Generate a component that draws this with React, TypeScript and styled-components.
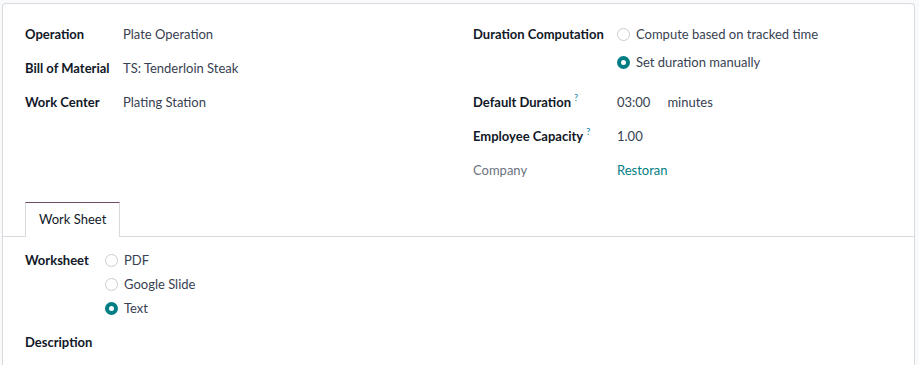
import styled, { createGlobalStyle } from "styled-components";

const GlobalStyle = createGlobalStyle`
  html, body {
    margin: 0;
    padding: 0;
    background: #f9fafb;
    font-family: Lato, "Noto Sans", sans-serif;
    font-size: 13px;
    color: #374151;
  }
`;

const Sheet = styled.div`
  margin: 3px 4px 0 2px;
  min-height: 370px;
  background: #fff;
  border: 1px solid #d8dadd;
  border-bottom: none;
  border-radius: 4px 4px 0 0;
  padding-top: 19px;
`;

const Groups = styled.div`
  display: grid;
  grid-template-columns: 448px 1fr;
  padding: 0 22px;
`;

const Group = styled.div`
  display: flex;
  flex-direction: column;
`;

const Row = styled.div<{ $labelWidth: number; $gap?: number }>`
  display: grid;
  grid-template-columns: ${(p) => p.$labelWidth}px 1fr;
  align-items: start;
  min-height: 22px;
  padding-bottom: ${(p) => p.$gap ?? 12}px;
`;

const Label = styled.div<{ $muted?: boolean }>`
  line-height: 22px;
  font-weight: ${(p) => (p.$muted ? 400 : 700)};
  color: ${(p) => (p.$muted ? "#6b7280" : "#111827")};
  white-space: nowrap;
`;

const Help = styled.sup`
  font-size: 9px;
  font-weight: 400;
  color: #0b84a5;
  margin-left: 3px;
  vertical-align: top;
  line-height: 14px;
`;

const Value = styled.div<{ $link?: boolean }>`
  line-height: 22px;
  color: ${(p) => (p.$link ? "#017e84" : "#374151")};
  display: flex;
  gap: 17px;
`;

const Options = styled.div<{ $shift: number }>`
  display: flex;
  flex-direction: column;
  margin-top: ${(p) => p.$shift}px;
`;

const Option = styled.label<{ $height: number }>`
  display: flex;
  align-items: center;
  gap: 6px;
  height: ${(p) => p.$height}px;
  color: #374151;
`;

const Dot = styled.span<{ $checked?: boolean }>`
  box-sizing: border-box;
  width: 13px;
  height: 13px;
  border-radius: 50%;
  background: #fff;
  border: ${(p) => (p.$checked ? "4px solid #017e84" : "1px solid #c9ccd1")};
  flex: none;
`;

const Notebook = styled.div`
  margin-top: 9px;
`;

const TabBar = styled.div`
  display: flex;
  padding: 0 22px;
  border-bottom: 1px solid #d8dadd;
`;

const Tab = styled.div`
  padding: 0 13px 1px;
  height: 33px;
  line-height: 33px;
  color: #111827;
  background: #fff;
  border: 1px solid #d8dadd;
  border-top: 1px solid #714b67;
  border-bottom: none;
  margin-bottom: -1px;
`;

const TabBody = styled.div`
  padding: 12px 22px 0;
`;

type Opt = { text: string; checked?: boolean };

function Radios({ items, height }: { items: Opt[]; height: number }) {
  return (
    <Options $shift={11 - height / 2}>
      {items.map((o) => (
        <Option key={o.text} $height={height}>
          <Dot $checked={o.checked} />
          <span>{o.text}</span>
        </Option>
      ))}
    </Options>
  );
}

export default function App() {
  return (
    <>
      <GlobalStyle />
      <Sheet>
        <Groups>
          <Group>
            <Row $labelWidth={98}>
              <Label>Operation</Label>
              <Value>Plate Operation</Value>
            </Row>
            <Row $labelWidth={98}>
              <Label>Bill of Material</Label>
              <Value>TS: Tenderloin Steak</Value>
            </Row>
            <Row $labelWidth={98}>
              <Label>Work Center</Label>
              <Value>Plating Station</Value>
            </Row>
          </Group>
          <Group>
            <Row $labelWidth={144} $gap={15}>
              <Label>Duration Computation</Label>
              <Radios
                height={28}
                items={[
                  { text: "Compute based on tracked time" },
                  { text: "Set duration manually", checked: true },
                ]}
              />
            </Row>
            <Row $labelWidth={144}>
              <Label>
                Default Duration<Help>?</Help>
              </Label>
              <Value>
                <span>03:00</span>
                <span>minutes</span>
              </Value>
            </Row>
            <Row $labelWidth={144}>
              <Label>
                Employee Capacity<Help>?</Help>
              </Label>
              <Value>1.00</Value>
            </Row>
            <Row $labelWidth={144}>
              <Label $muted>Company</Label>
              <Value $link>Restoran</Value>
            </Row>
          </Group>
        </Groups>
        <Notebook>
          <TabBar>
            <Tab>Work Sheet</Tab>
          </TabBar>
          <TabBody>
            <Row $labelWidth={80} $gap={11}>
              <Label>Worksheet</Label>
              <Radios
                height={24}
                items={[
                  { text: "PDF" },
                  { text: "Google Slide" },
                  { text: "Text", checked: true },
                ]}
              />
            </Row>
            <Row $labelWidth={80}>
              <Label>Description</Label>
            </Row>
          </TabBody>
        </Notebook>
      </Sheet>
    </>
  );
}
